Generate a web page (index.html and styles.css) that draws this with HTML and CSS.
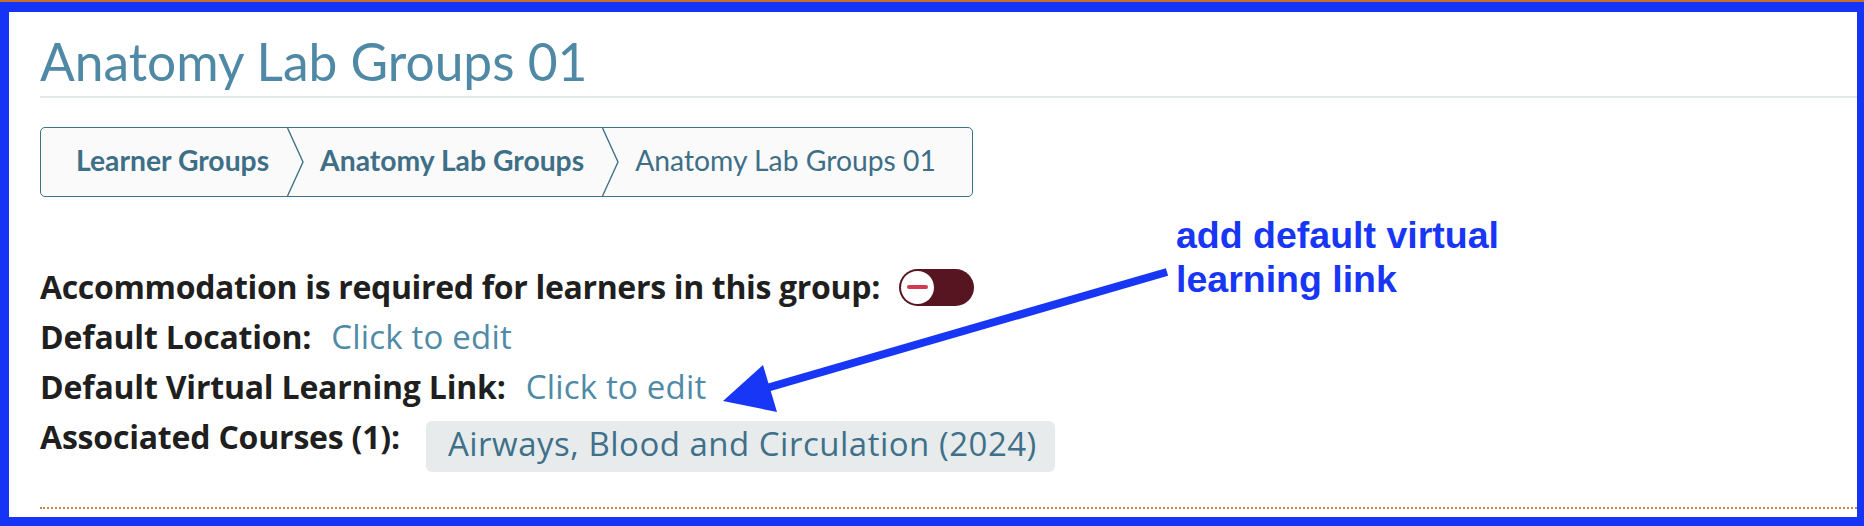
FILE: index.html
```html
<!DOCTYPE html>
<html lang="en">
<head>
<meta charset="utf-8">
<title>Anatomy Lab Groups 01</title>
<link rel="stylesheet" href="styles.css">
</head>
<body>
<div class="screen">
  <div class="frame">
    <main class="page">
      <h1 class="title">Anatomy Lab Groups 01</h1>
      <nav class="crumbs">
        <span class="crumb link">Learner Groups</span>
        <svg class="sep" viewBox="0 0 17 68" preserveAspectRatio="none"><polyline points="0.5,0 16,34 0.5,68"/></svg>
        <span class="crumb link">Anatomy Lab Groups</span>
        <svg class="sep" viewBox="0 0 17 68" preserveAspectRatio="none"><polyline points="0.5,0 16,34 0.5,68"/></svg>
        <span class="crumb current">Anatomy Lab Groups 01</span>
      </nav>
      <div class="details">
        <div class="row">
          <span class="label label-long">Accommodation is required for learners in this group:</span>
          <span class="toggle"><span class="knob"><span class="minus"></span></span></span>
        </div>
        <div class="row">
          <span class="label">Default Location:</span>
          <span class="edit">Click to edit</span>
        </div>
        <div class="row">
          <span class="label">Default Virtual Learning Link:</span>
          <span class="edit">Click to edit</span>
        </div>
        <div class="row row-top">
          <span class="label">Associated Courses (1):</span>
          <span class="pill">Airways, Blood and Circulation (2024)</span>
        </div>
      </div>
      <div class="dotted"></div>
      <div class="annotation">add default virtual<br>learning link</div>
    </main>
  </div>
  <svg class="arrow" width="1864" height="526" viewBox="0 0 1864 526">
    <line x1="1167" y1="272" x2="760" y2="390" />
    <polygon points="723,401 763,365 777,412" />
  </svg>
</div>
</body>
</html>
```
FILE: styles.css
```css
* { box-sizing: border-box; }
html, body { margin: 0; padding: 0; }
body { background: #1634f5; font-family: Lato, "Noto Sans", sans-serif; }

.screen {
  position: relative;
  width: 1864px;
  height: 526px;
  border-top: 2px solid #c8702f;
  background: #1634f5;
}
.frame {
  padding: 10px 7px 9px 9px;
  height: 524px;
}
.page {
  position: relative;
  background: #ffffff;
  height: 505px;
  padding-left: 31px;
}
.title {
  margin: 0;
  padding: 19px 0 5px 0;
  font-size: 51.5px;
  line-height: 60px;
  font-weight: 400;
  color: #5089a5;
  border-bottom: 2px solid #e3e8e8;
}
.crumbs {
  display: inline-flex;
  align-items: center;
  height: 70px;
  margin-top: 29px;
  padding: 0 36px 0 35px;
  background: #fafafa;
  border: 1px solid #3f7088;
  border-radius: 5px;
}
.crumb {
  font-size: 28.3px;
  line-height: 35px;
  color: #3e6f87;
  padding-bottom: 3px;
}
.crumb.link { font-weight: 700; }
.crumb.current { font-weight: 400; }
.sep {
  align-self: stretch;
  width: 17px;
  height: 68px;
  margin: 0 16px 0 18px;
  fill: none;
  stroke: #3f7088;
  stroke-width: 1.4;
}
.details {
  margin-top: 65px;
  font-family: "Open Sans", Lato, sans-serif;
}
.row {
  display: flex;
  align-items: center;
  height: 50px;
  font-size: 32px;
  line-height: 50px;
}
.row-top {
  align-items: flex-start;
  height: auto;
}
.label {
  font-weight: 700;
  color: #1f1f1f;
  letter-spacing: -0.2px;
  margin-right: 20px;
}
.label-long {
  letter-spacing: -0.33px;
  margin-right: 19px;
}
.edit {
  color: #4f8aa6;
  font-size: 33px;
  letter-spacing: 0.2px;
}
.toggle {
  display: inline-flex;
  align-items: center;
  width: 75px;
  height: 37px;
  border-radius: 19px;
  background: #561520;
  padding-left: 2px;
}
.knob {
  display: flex;
  align-items: center;
  justify-content: center;
  width: 33px;
  height: 33px;
  border-radius: 50%;
  background: #ffffff;
}
.minus {
  width: 21px;
  height: 4px;
  border-radius: 2px;
  background: #d23a4f;
}
.pill {
  margin-top: 9px;
  margin-left: 6px;
  height: 51px;
  padding: 4px 18px 9px 22px;
  font-size: 33px;
  letter-spacing: 0.5px;
  line-height: 38px;
  border-radius: 6px;
  background: #e7ebec;
  color: #3f7089;
  font-weight: 400;
}
.dotted {
  margin-top: 35px;
  border-top: 2px dotted #c98a45;
}
.annotation {
  position: absolute;
  left: 1167px;
  top: 202px;
  font-family: "Liberation Sans", Arial, sans-serif;
  font-weight: 700;
  font-size: 37.5px;
  line-height: 43.5px;
  color: #1836f5;
}
.arrow {
  position: absolute;
  left: 0;
  top: -2px;
  pointer-events: none;
}
.arrow line {
  stroke: #1836f5;
  stroke-width: 8;
}
.arrow polygon {
  fill: #1836f5;
}
```
